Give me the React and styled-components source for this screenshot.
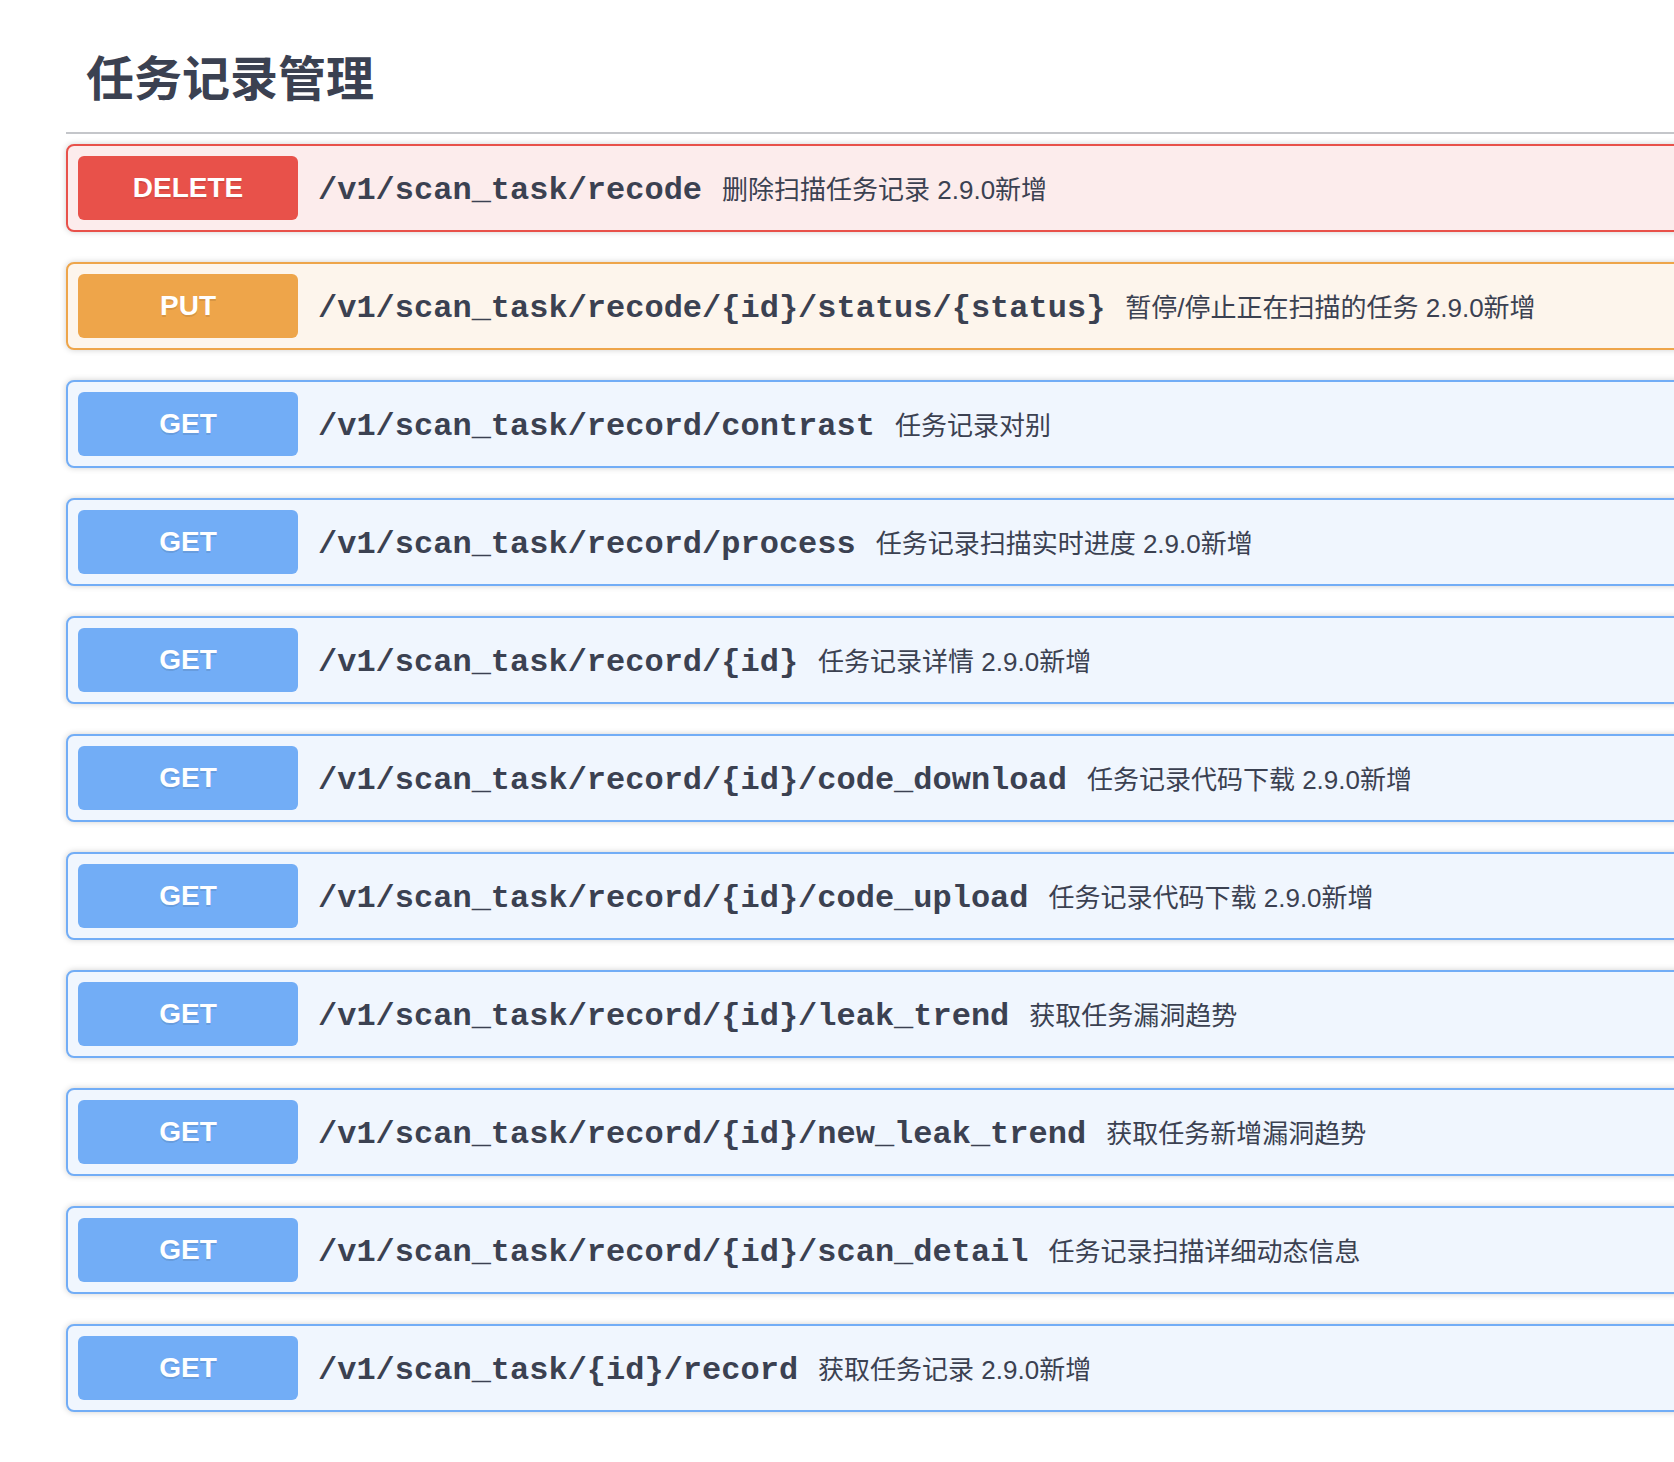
import React from "react";
import styled, { createGlobalStyle, css } from "styled-components";

const GlobalStyle = createGlobalStyle`
  html, body {
    margin: 0;
    padding: 0;
    background: #ffffff;
    overflow: hidden;
  }
  body {
    font-family: "Liberation Sans", "Noto Sans CJK SC", sans-serif;
    color: #3b4151;
  }
`;

const palette = {
  delete: { main: "#e8514a", bg: "#fcecec" },
  put: { main: "#eea54a", bg: "#fdf5ec" },
  get: { main: "#72adf6", bg: "#f0f6fe" },
};

const Page = styled.div`
  width: calc(100% + 200px);
  padding: 0 0 40px 66px;
  box-sizing: border-box;
`;

const TagTitle = styled.h4`
  margin: 0 0 10px;
  padding: 50px 40px 22px 20px;
  font-family: "Liberation Sans", "Noto Sans CJK SC", sans-serif;
  font-size: 48px;
  font-weight: 700;
  line-height: 60px;
  color: #3b4151;
  border-bottom: 2px solid rgba(59, 65, 81, 0.3);
`;

const OpList = styled.div`
  display: flex;
  flex-direction: column;
  gap: 30px;
`;

const OpBlock = styled.div`
  ${({ $m }) => css`
    border: 2px solid ${palette[$m].main};
    background: ${palette[$m].bg};
  `}
  border-radius: 8px;
  box-shadow: 0 0 6px rgba(0, 0, 0, 0.19);
`;

const Summary = styled.div`
  display: flex;
  align-items: center;
  padding: 10px;
`;

const Method = styled.span`
  flex: none;
  box-sizing: border-box;
  width: 220px;
  height: 64px;
  display: flex;
  align-items: center;
  justify-content: center;
  border-radius: 6px;
  background: ${({ $m }) => palette[$m].main};
  color: #ffffff;
  font-family: "Liberation Sans", sans-serif;
  font-size: 28px;
  font-weight: 700;
  text-shadow: 0 2px 0 rgba(0, 0, 0, 0.1);
`;

const Path = styled.span`
  padding: 4px 20px 0;
  font-family: "Liberation Mono", monospace;
  font-size: 32px;
  font-weight: 700;
  color: #3b4151;
  white-space: nowrap;
`;

const Description = styled.span`
  padding-bottom: 2px;
  font-family: "Liberation Sans", "Noto Sans CJK SC", sans-serif;
  font-size: 26px;
  color: #3b4151;
  white-space: nowrap;
`;

const ops = [
  ["delete", "/v1/scan_task/recode", "删除扫描任务记录 2.9.0新增"],
  ["put", "/v1/scan_task/recode/{id}/status/{status}", "暂停/停止正在扫描的任务 2.9.0新增"],
  ["get", "/v1/scan_task/record/contrast", "任务记录对别"],
  ["get", "/v1/scan_task/record/process", "任务记录扫描实时进度 2.9.0新增"],
  ["get", "/v1/scan_task/record/{id}", "任务记录详情 2.9.0新增"],
  ["get", "/v1/scan_task/record/{id}/code_download", "任务记录代码下载 2.9.0新增"],
  ["get", "/v1/scan_task/record/{id}/code_upload", "任务记录代码下载 2.9.0新增"],
  ["get", "/v1/scan_task/record/{id}/leak_trend", "获取任务漏洞趋势"],
  ["get", "/v1/scan_task/record/{id}/new_leak_trend", "获取任务新增漏洞趋势"],
  ["get", "/v1/scan_task/record/{id}/scan_detail", "任务记录扫描详细动态信息"],
  ["get", "/v1/scan_task/{id}/record", "获取任务记录 2.9.0新增"],
];

export default function App() {
  return (
    <>
      <GlobalStyle />
      <Page>
        <TagTitle>任务记录管理</TagTitle>
        <OpList>
          {ops.map(([m, path, desc], i) => (
            <OpBlock key={i} $m={m}>
              <Summary>
                <Method $m={m}>{m.toUpperCase()}</Method>
                <Path>{path}</Path>
                <Description>{desc}</Description>
              </Summary>
            </OpBlock>
          ))}
        </OpList>
      </Page>
    </>
  );
}
